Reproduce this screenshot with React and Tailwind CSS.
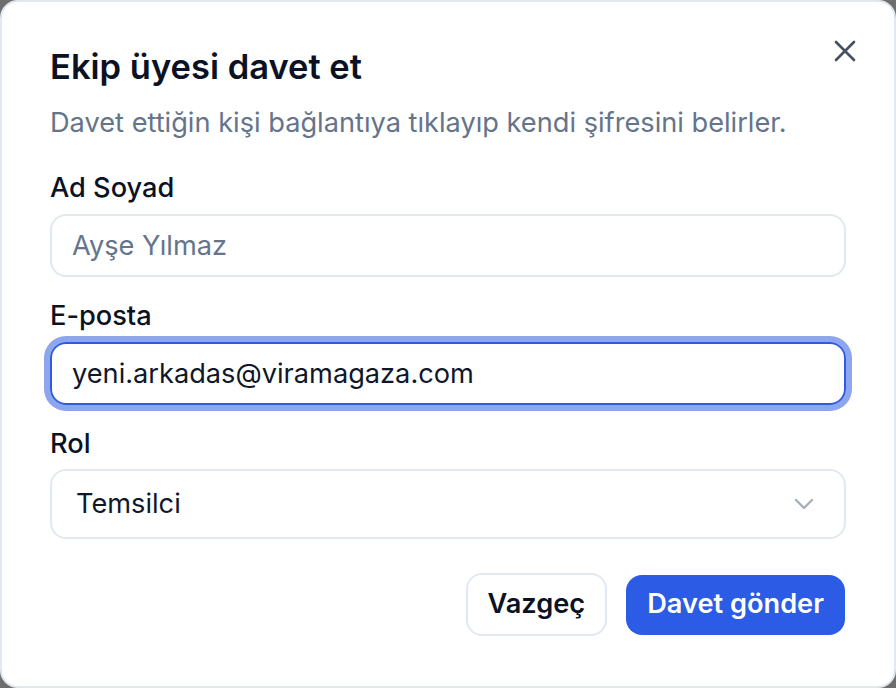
import React from 'react';

const InviteDialog = () => {
    return (
        <div className="min-h-screen bg-[#6e6e6e]" style={{ fontFamily: 'Inter, "Noto Sans", sans-serif' }}>
            <div className="relative w-[896px] h-[688px] bg-white border-2 border-[#e2e8f0] rounded-[18px] px-[48px] pt-[48px] flex flex-col">
                {/* Close */}
                <button className="absolute top-[37px] right-[37px] w-6 h-6 flex items-center justify-center text-[#475062]">
                    <svg width="22" height="22" viewBox="0 0 22 22" fill="none" stroke="currentColor" strokeWidth="2.6" strokeLinecap="round">
                        <path d="M2 2 20 20M20 2 2 20" />
                    </svg>
                </button>

                {/* Header */}
                <h2 className="text-[34.5px] leading-none font-semibold text-[#0b1224]">Ekip üyesi davet et</h2>
                <p className="mt-[24px] text-[27.2px] leading-none text-[#64748b]">
                    Davet ettiğin kişi bağlantıya tıklayıp kendi şifresini belirler.
                </p>

                {/* Form */}
                <div className="mt-[38px] flex flex-col gap-[25px]">
                    <div>
                        <label className="block text-[27.2px] leading-none font-medium text-[#0b1224] mb-[13px]">Ad Soyad</label>
                        <input
                            readOnly
                            placeholder="Ayşe Yılmaz"
                            className="w-full h-[63px] rounded-[16px] border-2 border-[#e2e8f0] px-[20px] text-[27.2px] text-[#0f172a] placeholder:text-[#64748b] outline-none"
                        />
                    </div>
                    <div>
                        <label className="block text-[27.2px] leading-none font-medium text-[#0b1224] mb-[13px]">E-posta</label>
                        <input
                            readOnly
                            defaultValue="yeni.arkadas@viramagaza.com"
                            className="w-full h-[63px] rounded-[16px] border-2 border-[#2f5be0] ring-[6px] ring-[#8ea6f0] px-[20px] text-[27.2px] text-[#0f172a] outline-none"
                        />
                    </div>
                    <div>
                        <label className="block text-[27.2px] leading-none font-medium text-[#0b1224] mb-[12px]">Rol</label>
                        <div className="w-full h-[70px] rounded-[16px] border-2 border-[#e2e8f0] pl-[24px] pr-[30px] flex items-center justify-between">
                            <span className="text-[27.2px] text-[#0f172a]">Temsilci</span>
                            <svg width="20" height="12" viewBox="0 0 20 12" fill="none" stroke="#a7afbd" strokeWidth="2.4" strokeLinecap="round" strokeLinejoin="round">
                                <path d="M2 2 10 10 18 2" />
                            </svg>
                        </div>
                    </div>
                </div>

                {/* Footer */}
                <div className="mt-[34px] flex justify-end items-center gap-[19px] pr-[1px]">
                    <button className="h-[63px] px-[20px] rounded-[16px] border-2 border-[#e2e8f0] bg-white text-[27.2px] font-semibold text-[#0b1224]">
                        Vazgeç
                    </button>
                    <button className="h-[60px] px-[21px] rounded-[16px] bg-[#2c5be6] text-[27.2px] font-semibold text-white">
                        Davet gönder
                    </button>
                </div>
            </div>
        </div>
    );
};

export default function App() {
    return <InviteDialog />;
}
